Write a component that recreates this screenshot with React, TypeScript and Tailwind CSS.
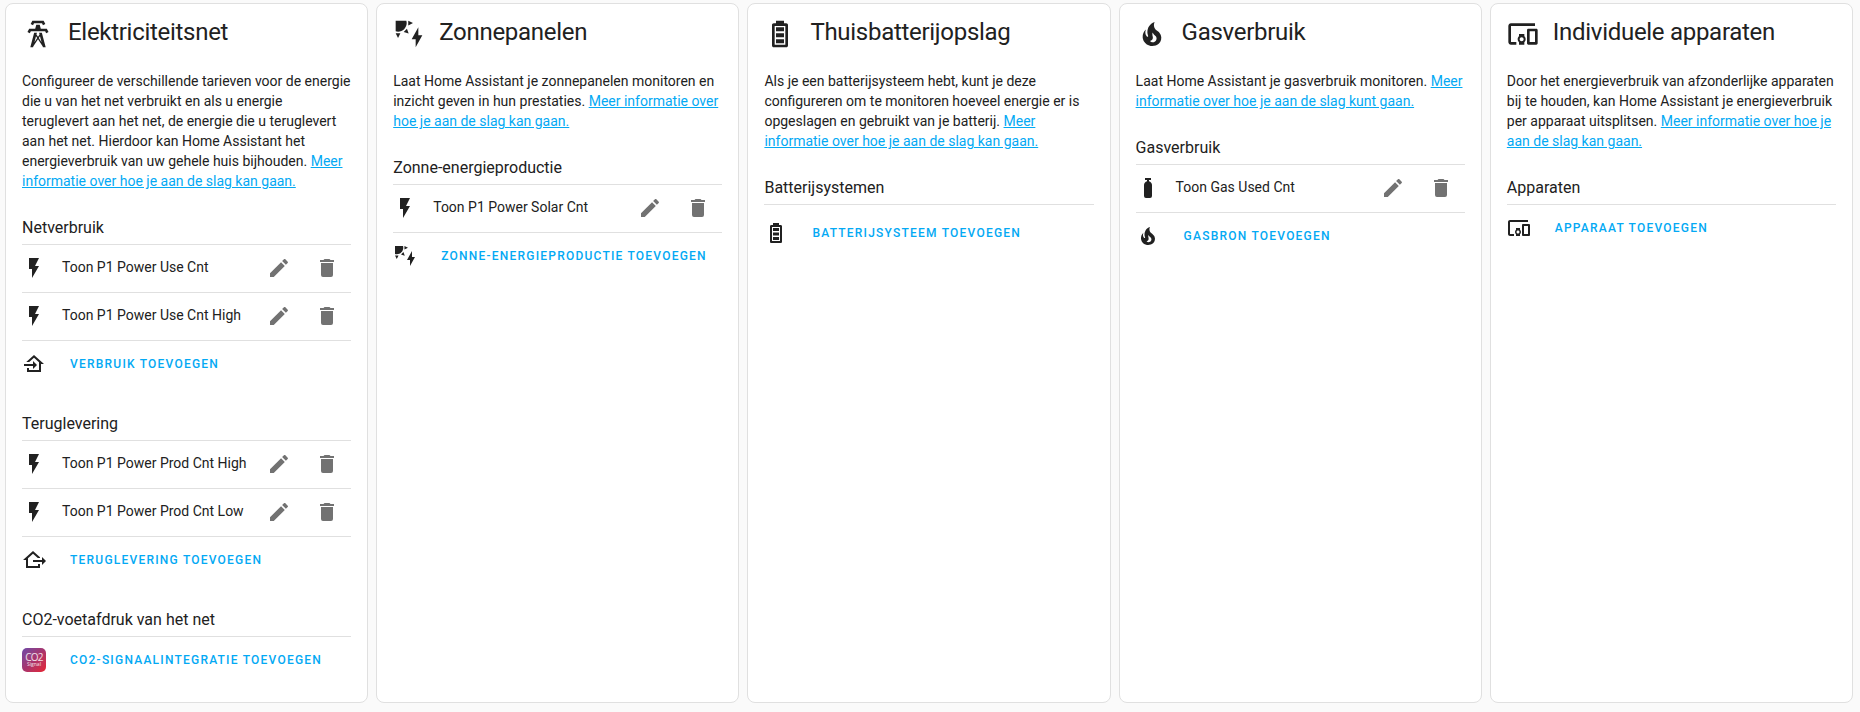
import React from "react";

const icons = {
  tower:
    "M8.28,5.45L6.5,4.55L7.76,2H16.23L17.5,4.55L15.72,5.44L15,4H9L8.28,5.45M18.62,8H14.09L13.3,5H10.7L9.91,8H5.38L4.1,10.55L5.89,11.44L6.62,10H17.38L18.1,11.45L19.89,10.56L18.62,8M17.77,22H15.7L15.46,21.1L12,15.9L8.53,21.1L8.3,22H6.23L9.12,11H11.19L10.83,12.35L12,14.1L13.16,12.35L12.81,11H14.88L17.77,22M11.4,15L10.5,13.65L9.32,18.13L11.4,15M14.68,18.12L13.5,13.64L12.6,15L14.68,18.12Z",
  solar:
    "M11.45,2V5.55L15,3.77L11.45,2M10.45,8L8,10.46L11.75,11.71L10.45,8M2,11.45L3.77,15L5.55,11.45H2M10,2H2V10C2.57,10.17 3.17,10.25 3.77,10.25C7.35,10.26 10.26,7.35 10.27,3.75C10.26,3.16 10.17,2.57 10,2M17,22V16H14L19,7V13H22L17,22Z",
  battery:
    "M16 20H8V6H16M16.67 4H15V2H9V4H7.33C6.6 4 6 4.6 6 5.33V20.67C6 21.4 6.6 22 7.33 22H16.67C17.41 22 18 21.41 18 20.67V5.33C18 4.6 17.4 4 16.67 4M15 16H9V19H15V16M15 7H9V10H15V7M15 11.5H9V14.5H15V11.5Z",
  fire: "M17.66 11.2C17.43 10.9 17.15 10.64 16.89 10.38C16.22 9.78 15.46 9.35 14.82 8.72C13.33 7.26 13 4.85 13.95 3C13 3.23 12.17 3.75 11.46 4.32C8.87 6.4 7.85 10.07 9.07 13.22C9.11 13.32 9.15 13.42 9.15 13.55C9.15 13.77 9 13.97 8.8 14.05C8.57 14.15 8.33 14.09 8.14 13.93C8.08 13.88 8.04 13.83 8 13.76C6.87 12.33 6.69 10.28 7.45 8.64C5.78 10 4.87 12.3 5 14.47C5.06 14.97 5.12 15.47 5.29 15.97C5.43 16.57 5.7 17.17 6 17.7C7.08 19.43 8.95 20.67 10.96 20.92C13.1 21.19 15.39 20.8 17.03 19.32C18.86 17.66 19.5 15 18.56 12.72L18.43 12.46C18.22 12 17.66 11.2 17.66 11.2M14.5 17.5C14.22 17.74 13.76 18 13.4 18.1C12.28 18.5 11.16 17.94 10.5 17.28C11.69 17 12.4 16.12 12.61 15.23C12.78 14.43 12.46 13.77 12.33 13C12.21 12.26 12.23 11.63 12.5 10.94C12.69 11.32 12.89 11.7 13.13 12C13.9 13 15.11 13.44 15.37 14.8C15.41 14.94 15.43 15.08 15.43 15.23C15.46 16.05 15.1 16.95 14.5 17.5Z",
  devices:
    "M3 6H21V4H3C1.9 4 1 4.9 1 6V18C1 19.1 1.9 20 3 20H7V18H3V6M13 12H9V13.78C8.39 14.33 8 15.11 8 16C8 16.89 8.39 17.67 9 18.22V20H13V18.22C13.61 17.67 14 16.88 14 16S13.61 14.33 13 13.78V12M11 17.5C10.17 17.5 9.5 16.83 9.5 16S10.17 14.5 11 14.5 12.5 15.17 12.5 16 11.83 17.5 11 17.5M22 8H16C15.5 8 15 8.5 15 9V19C15 19.5 15.5 20 16 20H22C22.5 20 23 19.5 23 19V9C23 8.5 22.5 8 22 8M21 18H17V10H21V18Z",
  flash: "M7,2V13H10V22L17,10H13L17,2H7Z",
  gas: "M16,9V20A2,2 0 0,1 14,22H10A2,2 0 0,1 8,20V9C8,7.14 9.27,5.57 11,5.13V4H9V2H15V4H13V5.13C14.73,5.57 16,7.14 16,9Z",
  pencil:
    "M20.71,7.04C21.1,6.65 21.1,6 20.71,5.63L18.37,3.29C18,2.9 17.35,2.9 16.96,3.29L15.12,5.12L18.87,8.87M3,17.25V21H6.75L17.81,9.93L14.06,6.18L3,17.25Z",
  trash:
    "M19,4H15.5L14.5,3H9.5L8.5,4H5V6H19M6,19A2,2 0 0,0 8,21H16A2,2 0 0,0 18,19V7H6V19Z",
  homeImport:
    "M15,13L11,9V12H2V14H11V17M5,20V16H7V18H17V10.19L12,5.69L7.21,10H4.22L12,3L22,12H19V20H5Z",
  homeExport:
    "M24 13L20 17V14H11V12H20V9L24 13M4 20V12H1L11 3L18 9.3V10H15.79L11 5.69L6 10.19V18H16V16H18V20H4Z",
};

type IconName = keyof typeof icons;

function Icon({ name, className = "size-6" }: { name: IconName; className?: string }) {
  return (
    <svg viewBox="0 0 24 24" className={`shrink-0 fill-current ${className}`} aria-hidden="true">
      <path d={icons[name]} />
    </svg>
  );
}

function Co2Logo() {
  return (
    <span className="flex size-6 shrink-0 flex-col items-center rounded-[5px] bg-linear-135 from-[#6d45a8] via-[#a8336c] to-[#e8202a] pt-[5px] text-white/85">
      <span className="font-['Open_Sans',sans-serif] text-[10px] leading-[9px] tracking-[-0.8px]">CO2</span>
      <span className="font-['Open_Sans',sans-serif] text-[5px] leading-[4px]">Signal</span>
    </span>
  );
}

function Card({
  icon,
  title,
  text,
  link,
  children,
}: {
  icon: IconName;
  title: string;
  text: string;
  link: string;
  children: React.ReactNode;
}) {
  return (
    <section className="flex h-[700px] min-w-0 flex-1 flex-col rounded-lg border border-[#e0e0e0] bg-white px-4">
      <header className="flex h-[67px] items-start">
        <Icon name={icon} className="mt-[14px] size-8" />
        <h1 className="mt-3 pl-3.5 text-2xl leading-8 tracking-[-0.012em] whitespace-nowrap">{title}</h1>
      </header>
      <p className="text-sm leading-5">
        {text}{" "}
        <a href="#" className="text-[#03a9f4] underline">
          {link}
        </a>
      </p>
      {children}
    </section>
  );
}

function Section({ title, first = false, children }: { title: string; first?: boolean; children: React.ReactNode }) {
  return (
    <div className={first ? "pt-[25px]" : "pt-6"}>
      <h2 className="h-[29px] border-b border-[#e0e0e0] text-base leading-6">{title}</h2>
      {children}
    </div>
  );
}

function Source({ icon = "flash", name }: { icon?: IconName; name: string }) {
  return (
    <div className="flex h-12 items-center border-b border-[#e0e0e0] pb-px">
      <Icon name={icon} />
      <span className="mb-0.5 flex-1 pl-4 text-sm leading-5 whitespace-nowrap">{name}</span>
      <button aria-label="Bewerken" className="flex h-6 w-12 items-center justify-center text-[#727272]">
        <Icon name="pencil" />
      </button>
      <button aria-label="Verwijderen" className="flex h-6 w-12 items-center justify-center text-[#727272]">
        <Icon name="trash" />
      </button>
    </div>
  );
}

function Add({ icon, label, tall = false }: { icon?: IconName; label: string; tall?: boolean }) {
  return (
    <div className={`flex items-center pb-px ${tall ? "h-[57px]" : "h-[47px]"}`}>
      {icon ? <Icon name={icon} /> : <Co2Logo />}
      <button className="pl-6 text-xs leading-5 font-medium tracking-[1.22px] whitespace-nowrap text-[#03a9f4] uppercase">
        {label}
      </button>
    </div>
  );
}

export default function App() {
  return (
    <main className="flex h-[712px] gap-2 bg-[#fafafa] pt-[3px] pr-[7px] pl-[5px] font-[Roboto,sans-serif] text-[#212121]">
      <Card
        icon="tower"
        title="Elektriciteitsnet"
        text="Configureer de verschillende tarieven voor de energie die u van het net verbruikt en als u energie teruglevert aan het net, de energie die u teruglevert aan het net. Hierdoor kan Home Assistant het energieverbruik van uw gehele huis bijhouden."
        link="Meer informatie over hoe je aan de slag kan gaan."
      >
        <Section title="Netverbruik" first>
          <Source name="Toon P1 Power Use Cnt" />
          <Source name="Toon P1 Power Use Cnt High" />
          <Add icon="homeImport" label="Verbruik toevoegen" />
        </Section>
        <Section title="Teruglevering">
          <Source name="Toon P1 Power Prod Cnt High" />
          <Source name="Toon P1 Power Prod Cnt Low" />
          <Add icon="homeExport" label="Teruglevering toevoegen" />
        </Section>
        <Section title="CO2-voetafdruk van het net">
          <Add label="CO2-signaalintegratie toevoegen" />
        </Section>
      </Card>
      <Card
        icon="solar"
        title="Zonnepanelen"
        text="Laat Home Assistant je zonnepanelen monitoren en inzicht geven in hun prestaties."
        link="Meer informatie over hoe je aan de slag kan gaan."
      >
        <Section title="Zonne-energieproductie" first>
          <Source name="Toon P1 Power Solar Cnt" />
          <Add icon="solar" label="Zonne-energieproductie toevoegen" />
        </Section>
      </Card>
      <Card
        icon="battery"
        title="Thuisbatterijopslag"
        text="Als je een batterijsysteem hebt, kunt je deze configureren om te monitoren hoeveel energie er is opgeslagen en gebruikt van je batterij."
        link="Meer informatie over hoe je aan de slag kan gaan."
      >
        <Section title="Batterijsystemen" first>
          <Add icon="battery" label="Batterijsysteem toevoegen" tall />
        </Section>
      </Card>
      <Card
        icon="fire"
        title="Gasverbruik"
        text="Laat Home Assistant je gasverbruik monitoren."
        link="Meer informatie over hoe je aan de slag kunt gaan."
      >
        <Section title="Gasverbruik" first>
          <Source icon="gas" name="Toon Gas Used Cnt" />
          <Add icon="fire" label="Gasbron toevoegen" />
        </Section>
      </Card>
      <Card
        icon="devices"
        title="Individuele apparaten"
        text="Door het energieverbruik van afzonderlijke apparaten bij te houden, kan Home Assistant je energieverbruik per apparaat uitsplitsen."
        link="Meer informatie over hoe je aan de slag kan gaan."
      >
        <Section title="Apparaten" first>
          <Add icon="devices" label="Apparaat toevoegen" />
        </Section>
      </Card>
    </main>
  );
}
